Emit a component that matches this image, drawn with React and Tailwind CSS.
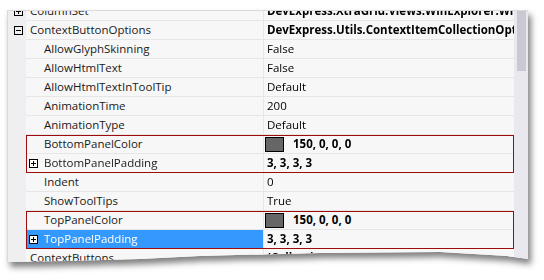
import React from "react"

function ExpandBox({ plus, white }) {
  return (
    <svg width="9" height="9" viewBox="0 0 9 9" className="shrink-0">
      <rect x="0.5" y="0.5" width="8" height="8" fill={white ? "#ffffff" : "none"} stroke="#000" />
      <path d="M2 4.5h5" stroke="#000" />
      {plus && <path d="M4.5 2v5" stroke="#000" />}
    </svg>
  )
}

const rows = [
  { name: "ColumnSet", value: "DevExpress.XtraGrid.Views.WinExplorer.WinExplorerViewColumns", bold: true, top: "plus" },
  { name: "ContextButtonOptions", value: "DevExpress.Utils.ContextItemCollectionOptions", bold: true, top: "minus" },
  { name: "AllowGlyphSkinning", value: "False", child: true },
  { name: "AllowHtmlText", value: "False", child: true },
  { name: "AllowHtmlTextInToolTip", value: "Default", child: true },
  { name: "AnimationTime", value: "200", child: true },
  { name: "AnimationType", value: "Default", child: true },
  { group: [
    { name: "BottomPanelColor", value: "150, 0, 0, 0", bold: true, child: true, swatch: true },
    { name: "BottomPanelPadding", value: "3, 3, 3, 3", bold: true, child: true, plus: true },
  ] },
  { name: "Indent", value: "0", child: true },
  { name: "ShowToolTips", value: "True", child: true },
  { group: [
    { name: "TopPanelColor", value: "150, 0, 0, 0", bold: true, child: true, swatch: true },
    { name: "TopPanelPadding", value: "3, 3, 3, 3", bold: true, child: true, plus: true, selected: true },
  ] },
  { name: "ContextButtons", value: "(Collection)", bold: true },
]

function Row({ r }) {
  return (
    <div className="flex h-[19px]">
      <div className="w-[18px] shrink-0 bg-[#efeff1] flex items-center pl-[6px]">
        {r.top && <ExpandBox plus={r.top === "plus"} />}
      </div>
      <div
        className={
          "w-[238px] shrink-0 flex items-center border-b border-r border-[#e6e6e6] whitespace-nowrap " +
          (r.selected ? "bg-[#3399ff] text-white" : "bg-[#f7f7f7] text-[#1a1a1a]")
        }
      >
        {r.child ? (
          <div className="flex items-center">
            <div className="w-[15px] pl-[3px] flex items-center">{r.plus && <ExpandBox plus white />}</div>
            <span className="pl-[3px]">{r.name}</span>
          </div>
        ) : (
          <span className="pl-[4px]">{r.name}</span>
        )}
      </div>
      <div className="flex-1 min-w-0 flex items-center bg-[#f7f7f7] border-b border-[#e6e6e6] whitespace-nowrap overflow-hidden text-black">
        {r.swatch ? (
          <>
            <div className="ml-[1px] w-[19px] h-[15px] shrink-0 bg-[#666666] border border-black" />
            <span className="pl-[9px] font-bold">{r.value}</span>
          </>
        ) : (
          <span className={"pl-[3px] " + (r.bold ? "font-bold" : "")}>{r.value}</span>
        )}
      </div>
    </div>
  )
}

export default function App() {
  return (
    <div className="w-[544px] h-[280px] bg-white overflow-hidden font-['Open_Sans',sans-serif] text-[11.5px] leading-none">
      <div className="pl-[7px] pt-[10px] [filter:drop-shadow(3px_5px_3px_rgba(0,0,0,0.5))]">
        <div className="w-[521px] h-[256px] flex overflow-hidden bg-[#f7f7f7] border-l border-t border-[#dadada] [clip-path:polygon(0_0,100%_0,100%_249px,500px_246px,433px_242px,313px_243px,193px_246px,133px_249px,60px_251px,0_252px)]">
          <div className="flex-1 min-w-0 mt-[-9px]">
            {rows.map((r, i) =>
              r.group ? (
                <div key={i} className="relative">
                  {r.group.map((g) => (
                    <Row key={g.name} r={g} />
                  ))}
                  <div className="absolute left-[18px] right-0 top-0 bottom-0 border border-[#9e0b0f] pointer-events-none" />
                </div>
              ) : (
                <Row key={i} r={r} />
              )
            )}
          </div>
          <div className="w-[14px] shrink-0 bg-[#e8e8ee] pl-[3px]">
            <div className="w-[9px] h-[60px] bg-[#c9c9d2]" />
          </div>
        </div>
      </div>
    </div>
  )
}
